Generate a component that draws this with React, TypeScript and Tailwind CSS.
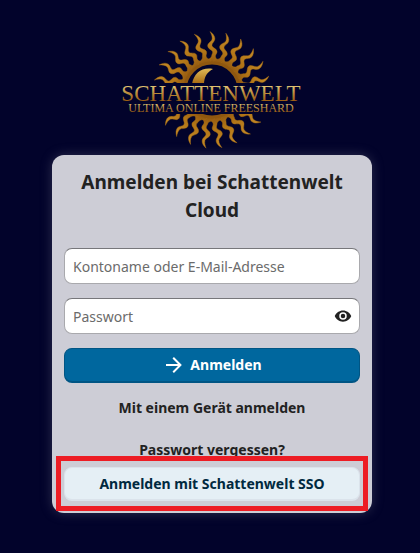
import { useState } from 'react';

const RAY_COUNT = 23;
const RAY_ANGLES = Array.from({ length: RAY_COUNT }, (_, i) => (i * 360) / RAY_COUNT - 2);
const RAY_PATH =
  'M0 -58.5 C2.6 -56.6 4.9 -54 4.7 -51 C4.5 -48.2 1.6 -47 1.5 -44.6 C1.5 -42 6 -41.6 6.4 -38.4 C6.6 -36.4 4.4 -35.2 4.6 -33.4 C4.8 -31.4 6 -30.4 8 -29 L6 -26 L-6 -26 L-5 -29.5 C-2.4 -31.2 0.4 -31.8 0.8 -34 C1 -35.6 2.4 -36.8 1.8 -38.4 C1 -40.6 -2.8 -41 -2.8 -44.4 C-2.8 -47.2 1.4 -48.4 1.9 -51 C2.3 -53.6 1.2 -56 0 -58.5Z';

function Logo() {
  return (
    <svg viewBox="0 0 180 120" className="h-[120px] w-[180px]" role="img" aria-label="Schattenwelt Ultima Online Freeshard">
      <defs>
        <radialGradient id="sun" gradientUnits="userSpaceOnUse" cx="0" cy="0" r="58">
          <stop offset="0.45" stopColor="#8e5511" />
          <stop offset="0.65" stopColor="#b07316" />
          <stop offset="1" stopColor="#c68c28" />
        </radialGradient>
        <linearGradient id="moon" x1="0" y1="0" x2="0" y2="1">
          <stop offset="0" stopColor="#dfba58" />
          <stop offset="1" stopColor="#a8690f" />
        </linearGradient>
        <linearGradient id="letters" x1="0" y1="0" x2="0" y2="1">
          <stop offset="0.2" stopColor="#e0c372" />
          <stop offset="0.5" stopColor="#b98a3a" />
          <stop offset="0.8" stopColor="#9a5c12" />
        </linearGradient>
        <clipPath id="halves">
          <rect x="0" y="0" width="180" height="53" />
          <rect x="0" y="84" width="180" height="36" />
        </clipPath>
      </defs>
      <g clipPath="url(#halves)">
        <g fill="url(#sun)" stroke="#a66c15" strokeWidth="0.4">
          {RAY_ANGLES.map((angle) => (
            <path key={angle} d={RAY_PATH} transform={`translate(90 60) rotate(${angle})`} />
          ))}
        </g>
        <circle cx="90" cy="60" r="27" fill="#02032b" stroke="#8f570f" strokeWidth="3" />
        <path d="M70 54 C72 43 80 37 91 39 C85 42 82 47 82 54Z" fill="url(#moon)" />
      </g>
      <g fill="url(#letters)" textAnchor="middle" className="font-['Liberation_Serif',serif]">
        <text x="89" y="71" fontSize="23">SCHATTENWELT</text>
        <text x="89" y="82" fontSize="12">ULTIMA ONLINE FREESHARD</text>
      </g>
    </svg>
  );
}

function ArrowIcon() {
  return (
    <svg viewBox="0 0 24 24" className="size-6" fill="currentColor" aria-hidden="true">
      <path d="M4,11V13H16L10.5,18.5L11.92,19.92L19.84,12L11.92,4.08L10.5,5.5L16,11H4Z" />
    </svg>
  );
}

function EyeIcon() {
  return (
    <svg viewBox="0 0 24 24" className="size-[18px]" fill="currentColor" aria-hidden="true">
      <path d="M12,9A3,3 0 0,0 9,12A3,3 0 0,0 12,15A3,3 0 0,0 15,12A3,3 0 0,0 12,9M12,17A5,5 0 0,1 7,12A5,5 0 0,1 12,7A5,5 0 0,1 17,12A5,5 0 0,1 12,17M12,4.5C7,4.5 2.73,7.61 1,12C2.73,16.39 7,19.5 12,19.5C17,19.5 21.27,16.39 23,12C21.27,7.61 17,4.5 12,4.5Z" />
    </svg>
  );
}

const FIELD =
  'block h-9 w-full rounded-lg border border-[#a9a9ad] border-t-[#77777b] bg-white px-2 text-[#222222] placeholder:text-[#6b6b6b] placeholder:opacity-100';

export default function App() {
  const [visible, setVisible] = useState(false);

  return (
    <main className="flex min-h-screen flex-col items-center bg-[#02032b] pt-[30px] pr-4 pb-10 pl-5 font-['Noto_Sans','Open_Sans',sans-serif] text-sm text-[#222222]">
      <Logo />
      <section className="relative mt-[5px] w-full max-w-[320px] rounded-xl bg-[#cdcdd6] px-3 pt-[13px] pb-3 shadow-[0_0_12px_rgba(110,110,130,0.4)]">
        <h1 className="mb-6 text-center text-[19px] leading-7 font-bold">Anmelden bei Schattenwelt Cloud</h1>
        <form className="flex flex-col gap-[14px]" onSubmit={(e) => e.preventDefault()}>
          <input className={FIELD} type="text" aria-label="Kontoname oder E-Mail-Adresse" placeholder="Kontoname oder E-Mail-Adresse" />
          <div className="relative">
            <input className={FIELD} type={visible ? 'text' : 'password'} aria-label="Passwort" placeholder="Passwort" />
            <button
              type="button"
              aria-label="Passwort anzeigen"
              onClick={() => setVisible(!visible)}
              className="absolute inset-y-0 right-0 flex w-[34px] items-center justify-center"
            >
              <EyeIcon />
            </button>
          </div>
          <button
            type="submit"
            className="flex h-[35px] items-center justify-center gap-1 rounded-lg border border-b-2 border-[#005584] bg-[#00679e] font-bold text-white"
          >
            <ArrowIcon />
            Anmelden
          </button>
        </form>
        <nav className="flex flex-col font-bold">
          <a href="#device" className="mt-2 flex h-[34px] items-center justify-center">Mit einem Gerät anmelden</a>
          <a href="#reset" className="mt-2 flex h-[34px] items-center justify-center">Passwort vergessen?</a>
          <a href="#sso" className="flex h-[34px] items-center justify-center rounded-lg border border-b-2 border-[#dbe3eb] bg-[#e5eff5] text-[#00293f]">
            Anmelden mit Schattenwelt SSO
          </a>
        </nav>
        <div className="pointer-events-none absolute inset-x-1 bottom-0.5 h-[55px] border-5 border-[#ed1c24]" />
      </section>
    </main>
  );
}
